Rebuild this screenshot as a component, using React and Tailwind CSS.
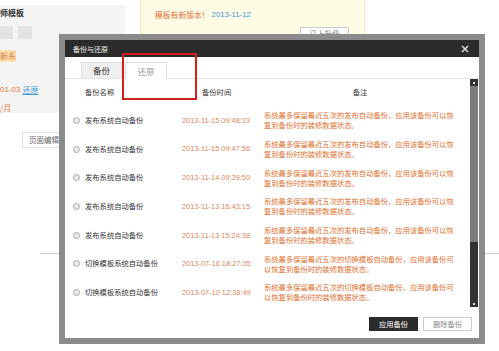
const NOTE_A = ["系统最多保留最近五次的发布自动备份，应用该备份可以恢", "复到备份时的装修数据状态。"];
const NOTE_B = ["系统最多保留最近五次的切换模板自动备份，应用该备份可", "以恢复到备份时的装修数据状态。"];

const rows = [
  { name: "发布系统自动备份", time: "2013-11-15 09:48:33", note: NOTE_A },
  { name: "发布系统自动备份", time: "2013-11-15 09:47:56", note: NOTE_A },
  { name: "发布系统自动备份", time: "2013-11-14 09:39:50", note: NOTE_A },
  { name: "发布系统自动备份", time: "2013-11-13 16:43:15", note: NOTE_A },
  { name: "发布系统自动备份", time: "2013-11-13 15:24:38", note: NOTE_A },
  { name: "切换模板系统自动备份", time: "2013-07-16 18:27:35", note: NOTE_B },
  { name: "切换模板系统自动备份", time: "2013-07-10 12:38:49", note: NOTE_B },
];

function Background() {
  return (
    <div className="flex flex-col">
      <div className="flex">
        <div className="w-[125px] flex flex-col">
          <div className="mt-[5px] h-[108px] bg-[#f4f4f4] flex flex-col text-[8px]">
            <div className="mt-[3px] h-[10px] leading-[10px] font-bold text-[#333]">师模板</div>
            <div className="mt-[8px] flex gap-[5px]">
              <div className="w-[13px] h-[13px] bg-[#e3e3e3]" />
              <div className="w-[14px] h-[13px] bg-[#e3e3e3]" />
            </div>
            <div className="mt-[11px] w-[16px] h-[12px] leading-[12px] bg-[#fbe2b5] text-[#e07b3c]">新系</div>
            <div className="mt-[23px] flex gap-[2px] leading-[10px]">
              <span className="font-['Liberation_Sans'] text-[#e07b3c]">01-03</span>
              <span className="text-[#3b94d3] underline">还原</span>
            </div>
            <div className="mt-[8px] leading-[10px] text-[#e07b3c]">/月</div>
          </div>
          <div className="mt-[19px] ml-[22px] w-[44px] h-[16px] border border-[#ddd] bg-white text-[7.5px] leading-[14px] text-center text-[#666]">
            页面编辑
          </div>
        </div>
        <div className="ml-[15px] w-[225px] h-[60px] bg-[#fffce6] border border-[#f1e9bf] border-t-0 relative">
          <div className="mt-[10px] ml-[14px] flex items-center gap-[2px] text-[7.8px] leading-[10px]">
            <span className="text-[#e0703c]">模板有新版本！</span>
            <span className="font-['Liberation_Sans'] text-[#3b9bd6]">2013-11-12</span>
          </div>
          <div className="mt-[7px] ml-[159px] w-[49px] h-[16px] border border-[#ccc] bg-white text-[7.5px] leading-[12px] text-center text-[#777]">
            马上升级
          </div>
        </div>
      </div>
      <div className="mt-[105px] ml-[40px] h-px bg-[#cfcfcf]" />
    </div>
  );
}

function Scrollbar() {
  return (
    <div className="w-[8px] mr-[1px] flex flex-col bg-[#7b7b7b]">
      <div className="h-[7px] bg-[#333] flex items-center justify-center">
        <div className="w-[2px] h-[2px] bg-[#ddd]" />
      </div>
      <div className="flex-1" />
      <div className="h-[65px] bg-[#333] flex flex-col justify-end items-center pb-[2px]">
        <div className="w-[2px] h-[2px] bg-[#ddd]" />
      </div>
    </div>
  );
}

function Modal() {
  return (
    <div className="absolute left-[59px] top-[34px] w-[426px] h-[310px] bg-[#8b8b8b] p-[6px]">
      <div className="flex h-full flex-col bg-white font-['Noto_Sans_CJK_SC',sans-serif]">
        <div className="h-[17px] bg-[#2b2b2b] flex items-center justify-between pl-[8px] pr-[10px]">
          <span className="text-[7px] leading-[10px] text-[#eee]">备份与还原</span>
          <svg width="8" height="8" viewBox="0 0 8 8">
            <path d="M1 1L7 7M7 1L1 7" stroke="#d8d8d8" strokeWidth="1.6" />
          </svg>
        </div>
        <div className="h-[22px] flex items-end pl-[16px] border-b border-[#e3e3e3]">
          <div className="w-[41px] h-[16px] bg-[#efefef] border border-[#ddd] border-b-0 text-[8.5px] leading-[15px] text-center text-[#333]">
            备份
          </div>
          <div className="ml-[3px] w-[42px] h-[17px] -mb-px bg-white border border-[#ddd] border-b-0 text-[8.5px] leading-[16px] text-center text-[#999]">
            还原
          </div>
        </div>
        <div className="flex flex-1">
          <div className="flex-1 flex flex-col">
            <div className="h-[27px] flex items-center text-[7.3px] text-[#333]">
              <div className="w-[20px]" />
              <div className="w-[97px]">备份名称</div>
              <div className="w-[82px] pl-[20px]">备份时间</div>
              <div className="w-[192px] text-center">备注</div>
            </div>
            {rows.map((r, i) => (
              <div key={i} className="h-[28.7px] flex items-center">
                <div className="w-[20px] pl-[8px]">
                  <div className="w-[7px] h-[7px] rounded-full border border-[#aaa] bg-[#e9e9e9]" />
                </div>
                <div className="w-[97px] text-[7.3px] text-[#333] whitespace-nowrap">{r.name}</div>
                <div className="w-[82px] font-['Liberation_Sans'] text-[7.4px] text-[#dd875a] whitespace-nowrap">{r.time}</div>
                <div className="w-[192px] text-[7.3px] leading-[10px] text-[#e0702f] whitespace-nowrap">
                  <div>{r.note[0]}</div>
                  <div>{r.note[1]}</div>
                </div>
              </div>
            ))}
          </div>
          <Scrollbar />
        </div>
        <div className="h-[31px] flex justify-end items-start pt-[10px] pr-[7px] gap-[5px]">
          <div className="w-[49px] h-[14px] bg-[#2b2b2b] text-[7.3px] leading-[14px] text-center text-white">应用备份</div>
          <div className="w-[49px] h-[14px] border border-[#ccc] bg-white text-[7.3px] leading-[12px] text-center text-[#888]">删除备份</div>
        </div>
      </div>
    </div>
  );
}

export default function App() {
  return (
    <div className="relative w-[499px] h-[351px] overflow-hidden bg-white font-['Noto_Sans_CJK_SC',sans-serif]">
      <Background />
      <Modal />
      <div className="absolute left-[122px] top-[53px] w-[75px] h-[47px] border-2 border-[#d0201c]" />
    </div>
  );
}
